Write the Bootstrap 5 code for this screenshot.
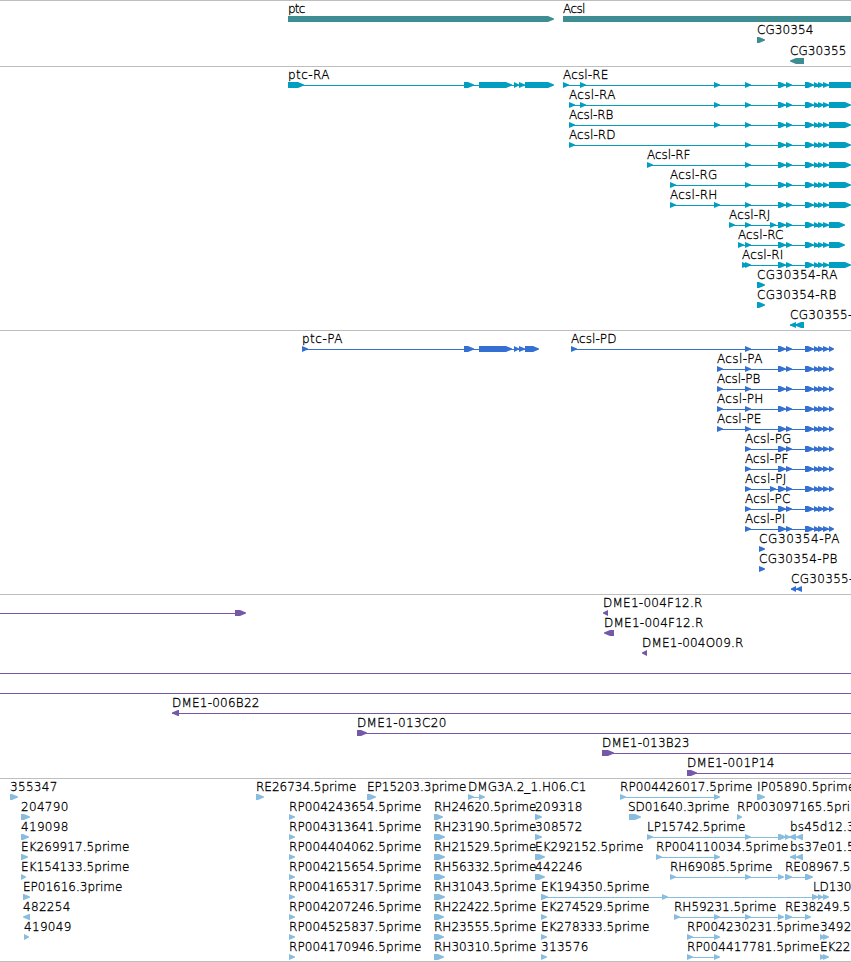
<!DOCTYPE html>
<html lang="en">
<head>
    <meta charset="UTF-8">
    <meta name="viewport" content="width=device-width, initial-scale=1.0">
    <title>Genome Browser - ptc / Acsl</title>
    <link href="https://cdn.jsdelivr.net/npm/bootstrap@5.3.0/dist/css/bootstrap.min.css" rel="stylesheet">
    <style>
        body {
            font-family: "DejaVu Sans", sans-serif;
            font-size: 12px;
        }
        .track {
            border-top: 1px solid #bebebe;
        }
        .track-end {
            height: 1px;
            background: #bebebe;
        }
        .lane {
            height: 20px;
            width: 100%;
            overflow: visible;
        }
        .lane text {
            fill: #000;
            font-weight: 200;
            stroke: #000;
            stroke-width: 0.3px;
        }
        .lane rect {
            shape-rendering: crispEdges;
        }
        #genes { color: #3d8d93; height: 66px; }
        #genes .lane { height: 21px; }
        #transcripts { color: #009fc1; height: 264px; }
        #proteins { color: #3470d1; height: 264px; }
        #bacs { color: #7658a8; height: 184px; }
        #ests { color: #88bddf; height: 183px; }
    </style>
</head>
<body class="bg-white overflow-hidden">
    <main class="d-flex flex-column w-100 overflow-hidden">
        <section class="track" id="genes"></section>
        <section class="track" id="transcripts"></section>
        <section class="track" id="proteins"></section>
        <section class="track" id="bacs"></section>
        <section class="track" id="ests"></section>
        <div class="track-end"></div>
    </main>

    <script src="https://cdn.jsdelivr.net/npm/bootstrap@5.3.0/dist/js/bootstrap.bundle.min.js"></script>
    <script>
        // Feature: [label, label x, label width, exons, line]
        // Exon: [start, end], drawn pointing left when start > end
        const tail = [[778, 786], [786, 792], [805, 814], [814, 819], [818, 824], [823, 829]];
        const arrow = x => [x, x + 6];

        const rna = (name, width, starts, end) =>
            [[name, starts[0], width, [...starts.map(arrow), ...tail, [829, end]]]];
        const protein = (name, width, starts) =>
            [[name, starts[0], width, [...starts.map(arrow), ...tail, [829, 834]]]];

        // The two EST columns that share the same label widths
        const rp = id => [`RP${id}.5prime`, 289, 133, [[289, 295]]];
        const rh = (id, end) => [`RH${id}.5prime`, 434, 103, [[434, end]]];

        const tracks = {
            genes: [
                [['ptc', 288, 18, [[288, 554]]], ['Acsl', 563, 23, [[563, 870]]]],
                [['CG30354', 757, 57, [[757, 765]]]],
                [['CG30355', 790, 57, [[804, 790]]]]
            ],
            transcripts: [
                [
                    ['ptc-RA', 288, 42, [[288, 304], [464, 474], [479, 512], [514, 519], [519, 525], [525, 554]]],
                    ...rna('Acsl-RE', 46, [563, 580, 714, 745], 858)
                ],
                rna('Acsl-RA', 47, [569, 580, 714, 745], 851),
                rna('Acsl-RB', 45, [569, 714, 745], 851),
                rna('Acsl-RD', 47, [569, 745], 851),
                rna('Acsl-RF', 44, [647, 745], 851),
                rna('Acsl-RG', 48, [670, 745], 851),
                rna('Acsl-RH', 48, [670, 714, 745], 851),
                rna('Acsl-RJ', 42, [729, 745, 770], 845),
                rna('Acsl-RC', 46, [738, 745], 845),
                rna('Acsl-RI', 42, [742, 745], 851),
                [['CG30354-RA', 757, 81, [[757, 765]]]],
                [['CG30354-RB', 757, 80, [[757, 765]]]],
                [['CG30355-', 790, 63, [[796, 790], [804, 795]]]]
            ],
            proteins: [
                [
                    ['ptc-PA', 302, 41, [[302, 308], [464, 474], [479, 512], [514, 519], [519, 525], [525, 539]]],
                    ...protein('Acsl-PD', 46, [571, 745])
                ],
                protein('Acsl-PA', 46, [717, 745]),
                protein('Acsl-PB', 44, [717, 745]),
                protein('Acsl-PH', 47, [717, 745]),
                protein('Acsl-PE', 45, [717, 745]),
                protein('Acsl-PG', 47, [745]),
                protein('Acsl-PF', 44, [745]),
                protein('Acsl-PJ', 42, [745, 770]),
                protein('Acsl-PC', 46, [745]),
                protein('Acsl-PI', 41, [745]),
                [['CG30354-PA', 759, 81, [[759, 765]]]],
                [['CG30354-PB', 759, 79, [[759, 765]]]],
                [['CG30355-', 791, 63, [[796, 791], [802, 796]]]]
            ],
            bacs: [
                [['', 0, 0, [[235, 246]], [0, 246]], ['DME1-004F12.R', 603, 100, [[608, 603]]]],
                [['DME1-004F12.R', 604, 100, [[614, 604]]]],
                [['DME1-004O09.R', 642, 102, [[647, 642]]]],
                [['', 0, 0, [], [0, 860]]],
                [['', 0, 0, [], [0, 860]]],
                [['DME1-006B22', 172, 88, [[179, 172]], [172, 860]]],
                [['DME1-013C20', 357, 90, [[357, 367]], [357, 860]]],
                [['DME1-013B23', 602, 88, [[602, 614]], [602, 860]]],
                [['DME1-001P14', 687, 88, [[687, 697]], [687, 860]]]
            ],
            ests: [
                [
                    ['355347', 10, 48, [[10, 18]]],
                    ['RE26734.5prime', 256, 101, [[256, 264]]],
                    ['EP15203.3prime', 367, 100, [[367, 376]]],
                    ['DMG3A.2_1.H06.C1', 468, 119, [[468, 474], [479, 485]]],
                    ['RP004426017.5prime', 620, 133, [[620, 626], [714, 720]]],
                    ['IP05890.5prime', 757, 99, [[757, 765]]]
                ],
                [
                    ['204790', 21, 48, [[21, 30]]],
                    rp('004243654'), rh('24620', 443),
                    ['209318', 535, 48, [[535, 542]]],
                    ['SD01640.3prime', 628, 102, [[629, 641]]],
                    ['RP003097165.5prime', 737, 133, [[737, 742]]]
                ],
                [
                    ['419098', 21, 48, [[21, 29]]],
                    rp('004313641'), rh('23190', 445),
                    ['308572', 535, 48, [[535, 542]]],
                    ['LP15742.5prime', 647, 99, [[647, 653], [745, 751], [778, 786], [785, 790]]],
                    ['bs45d12.3prime', 790, 101, [[796, 789], [803, 796]]]
                ],
                [
                    ['EK269917.5prime', 21, 109, [[21, 28]]],
                    rp('004404062'), rh('21529', 445),
                    ['EK292152.5prime', 535, 109, [[535, 545]]],
                    ['RP004110034.5prime', 656, 133, [[656, 662], [714, 720]]],
                    ['bs37e01.5prime', 790, 101, [[796, 790], [803, 796]]]
                ],
                [
                    ['EK154133.5prime', 21, 109, [[21, 26]]],
                    rp('004215654'), rh('56332', 445),
                    ['442246', 535, 48, [[535, 545]]],
                    ['RH69085.5prime', 670, 103, [[670, 676], [745, 751], [778, 784]]],
                    ['RE08967.5prime', 785, 101, [[785, 792], [805, 813]]]
                ],
                [
                    ['EP01616.3prime', 23, 100, [[23, 30]]],
                    rp('004165317'), rh('31043', 445),
                    ['EK194350.5prime', 541, 109, [[541, 548], [662, 668], [812, 818]]],
                    ['LD130', 813, 39, [[812, 818], [818, 823], [823, 829]]]
                ],
                [
                    ['482254', 23, 48, [[30, 23]]],
                    rp('004207246'), rh('22422', 444),
                    ['EK274529.5prime', 541, 109, [[541, 547]]],
                    ['RH59231.5prime', 674, 103, [[674, 680], [714, 720], [745, 751], [778, 784]]],
                    ['RE38249.5prime', 785, 101, [[785, 792], [805, 811]]]
                ],
                [
                    ['419049', 24, 48, [[24, 29]]],
                    rp('004525837'), rh('23555', 444),
                    ['EK278333.5prime', 541, 109, [[541, 547]]],
                    ['RP004230231.5prime', 687, 133, [[687, 693], [714, 720]]],
                    ['3492', 820, 32, [[820, 825], [823, 829]]]
                ],
                [
                    rp('004170946'), rh('30310', 444),
                    ['313576', 541, 48, [[541, 547]]],
                    ['RP004417781.5prime', 687, 133, [[687, 693], [714, 720]]],
                    ['EK22', 820, 31, [[820, 825], [823, 829]]]
                ]
            ]
        };

        function exonPath([start, end]) {
            const dir = end > start ? 1 : -1;
            const neck = end - dir * Math.min(6, Math.abs(end - start));
            return `M${start} 15H${neck}L${end} 17.5V18.5L${neck} 21H${start}Z`;
        }

        function drawFeature([label, x, width, exons, line]) {
            const ends = line || [Math.min(...exons.flat()), Math.max(...exons.flat())];
            const backbone = line || exons.length > 1
                ? `<rect x="${ends[0]}" y="18" width="${ends[1] - ends[0] - 2}" height="1"/>` : '';
            const text = label
                ? `<text x="${x}" y="12" textLength="${width - 0.6}">${label}</text>` : '';
            return `${backbone}<path d="${exons.map(exonPath).join('')}"/>${text}`;
        }

        for (const [id, lanes] of Object.entries(tracks)) {
            document.getElementById(id).innerHTML = lanes
                .map(lane => `<svg class="lane d-block" fill="currentColor">${lane.map(drawFeature).join('')}</svg>`)
                .join('');
        }
    </script>
</body>
</html>
